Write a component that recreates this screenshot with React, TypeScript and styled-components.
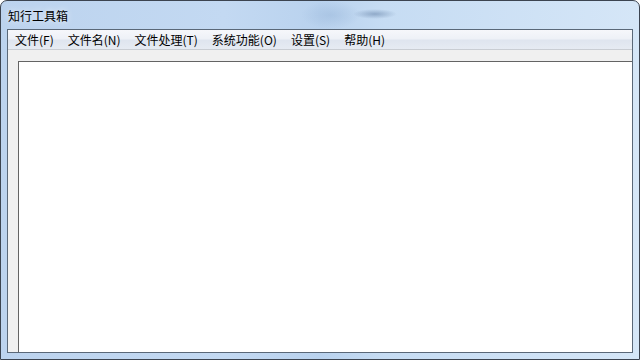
import React from "react";
import styled, { createGlobalStyle } from "styled-components";

const Global = createGlobalStyle`
  html, body { margin: 0; padding: 0; background: #ffffff; }
  body { width: 640px; height: 360px; overflow: hidden; }
`;

const Window = styled.div`
  position: relative;
  width: 640px;
  height: 360px;
  box-sizing: border-box;
  border: 1px solid #3c4450;
  border-radius: 7px 7px 0 0;
  background: linear-gradient(90deg, #bcd3ee 0%, #c3d9f2 35%, #b9d2ee 50%, #c6dcf3 60%, #d5e6f7 100%);
  display: flex;
  flex-direction: column;
  overflow: hidden;
  font-family: "Noto Sans CJK SC", "Liberation Sans", sans-serif;
`;

const Glow = styled.div`
  position: absolute;
  left: 300px;
  top: 0;
  width: 60px;
  height: 28px;
  background: radial-gradient(ellipse at center, rgba(150, 180, 215, 0.45), rgba(150, 180, 215, 0) 70%);
  pointer-events: none;
`;

const Smudge = styled.div`
  position: absolute;
  left: 352px;
  top: 8px;
  width: 44px;
  height: 10px;
  background: radial-gradient(ellipse at center, rgba(80, 110, 150, 0.45), rgba(80, 110, 150, 0) 70%);
  pointer-events: none;
`;

const TitleBar = styled.div`
  height: 28px;
  display: flex;
  align-items: center;
  padding-left: 7px;
  font-size: 12px;
  color: #000;
  text-shadow: 0 0 6px rgba(255, 255, 255, 0.9);
`;

const Client = styled.div`
  flex: 1;
  margin: 0 6px 6px 6px;
  border: 1px solid #5a6878;
  display: flex;
  flex-direction: column;
  background: #f0f0f0;
`;

const MenuBar = styled.div`
  height: 19px;
  display: flex;
  align-items: center;
  padding-left: 0;
  background: linear-gradient(180deg, #f6f7fb 0%, #eef1f7 45%, #dfe5ef 55%, #e6ebf3 100%);
  border-bottom: 1px solid #c9cdd3;
`;

const MenuItem = styled.span`
  padding: 0 7px;
  font-size: 12px;
  line-height: 19px;
  color: #000;
  white-space: nowrap;
`;

const Body = styled.div`
  flex: 1;
  display: flex;
  padding-top: 11px;
  padding-left: 10px;
`;

const Canvas = styled.div`
  flex: 1;
  background: #ffffff;
  border-top: 1px solid #646464;
  border-left: 1px solid #646464;
`;

const menus = ["文件(F)", "文件名(N)", "文件处理(T)", "系统功能(O)", "设置(S)", "帮助(H)"];

export default function App() {
  return (
    <>
      <Global />
      <Window>
        <Glow />
        <Smudge />
        <TitleBar>知行工具箱</TitleBar>
        <Client>
          <MenuBar>
            {menus.map((m) => (
              <MenuItem key={m}>{m}</MenuItem>
            ))}
          </MenuBar>
          <Body>
            <Canvas />
          </Body>
        </Client>
      </Window>
    </>
  );
}
